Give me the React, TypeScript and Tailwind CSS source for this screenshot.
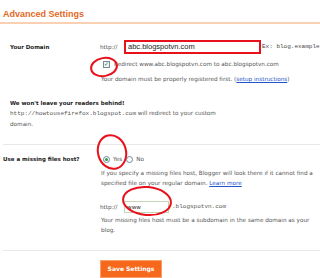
import React from 'react';

const mono = { fontFamily: '"Liberation Mono", "DejaVu Sans Mono", monospace' };

const Ring: React.FC<{ cx: number; cy: number; rx: number; ry: number; rot?: number }> = ({ cx, cy, rx, ry, rot = 0 }) => (
  <svg className="absolute left-0 top-0 pointer-events-none" width={320} height={278}>
    <ellipse cx={cx} cy={cy} rx={rx} ry={ry} transform={`rotate(${rot} ${cx} ${cy})`} fill="none" stroke="#e8101a" strokeWidth={2} />
  </svg>
);

const App: React.FC = () => {
  return (
    <div
      className="relative w-[320px] h-[278px] overflow-hidden bg-white text-[#555] text-[5.7px] leading-[10px]"
      style={{ fontFamily: '"DejaVu Sans", Verdana, sans-serif' }}
    >
      {/* header */}
      <div className="h-[24px] pl-[3px] pt-[8px] border-b-2 border-[#fad0b2]">
        <h1 className="text-[9px] leading-[12px] font-bold text-[#e3691f]" style={{ fontFamily: '"Liberation Sans", Arial, sans-serif' }}>
          Advanced Settings
        </h1>
      </div>

      {/* domain */}
      <div className="mt-[16px] h-[14px] flex items-center">
        <div className="w-[100px] pl-[10px] font-bold text-[#222] text-[5.5px]">Your Domain</div>
        <span className="w-[24px]">http://</span>
        <div className="w-[137px] h-[14px] border-2 border-[#e8101a] bg-white flex items-center pl-[2px]">
          <span className="text-[7.5px] text-[#222]" style={{ fontFamily: '"Liberation Sans", Arial, sans-serif' }}>abc.blogspotvn.com</span>
        </div>
        <span className="ml-[1px] whitespace-nowrap text-[6px] text-[#444]" style={mono}>Ex: blog.example</span>
      </div>

      <div className="mt-[5px] h-[10px] flex items-center pl-[103px]">
        <span className="w-[7px] h-[7px] border border-[#7a8a99] bg-[#eef3f7] flex items-center justify-center text-[6px] leading-none text-[#2a8a2a]">✓</span>
        <span className="ml-[4px] whitespace-nowrap">Redirect www.abc.blogspotvn.com to abc.blogspotvn.com</span>
      </div>

      <div className="mt-[5px] h-[10px] pl-[101px] whitespace-nowrap">
        Your domain must be properly registered first. (<span className="text-[#2255cc] underline">setup instructions</span>)
      </div>

      {/* readers */}
      <div className="mt-[14px] h-[10px] pl-[10px] font-bold text-[#222] text-[5.5px]">We won't leave your readers behind!</div>
      <div className="pl-[10px]">
        <div className="whitespace-nowrap">
          <span className="text-[6px]" style={mono}>http://howtousefirefox.blogspot.com</span> will redirect to your custom
        </div>
        <div>domain.</div>
      </div>

      <div className="mt-[15px] ml-[3px] border-t border-[#e8e8e8]" />

      {/* missing files host */}
      <div className="mt-[9px] h-[10px] flex items-center">
        <div className="w-[100px] pl-[3px] font-bold text-[#222] text-[5.5px]">Use a missing files host?</div>
        <span className="ml-[3px] w-[7px] h-[7px] rounded-full border border-[#6d86a3] bg-white flex items-center justify-center">
          <span className="w-[3px] h-[3px] rounded-full bg-[#2f9a3a]" />
        </span>
        <span className="ml-[3px]">Yes</span>
        <span className="ml-[4px] w-[7px] h-[7px] rounded-full border border-[#6d86a3] bg-white" />
        <span className="ml-[3px]">No</span>
      </div>

      <div className="mt-[4px] pl-[101px]">
        <div className="whitespace-nowrap">If you specify a missing files host, Blogger will look there if it cannot find a</div>
        <div className="whitespace-nowrap">
          specified file on your regular domain. <span className="text-[#2255cc] underline">Learn more</span>
        </div>
      </div>

      <div className="mt-[13px] h-[12px] flex items-center pl-[100px]">
        <span className="w-[24px]">http://</span>
        <div className="w-[45px] h-[12px] border border-[#c5d4b4] bg-white flex items-center pl-[2px]">
          <span className="text-[#333]">www</span>
        </div>
        <span className="ml-[3px] text-[6px]" style={mono}>.blogspotvn.com</span>
      </div>

      <div className="mt-[2px] pl-[101px]">
        <div className="whitespace-nowrap">Your missing files host must be a subdomain in the same domain as your</div>
        <div>blog.</div>
      </div>

      <div className="mt-[15px] ml-[3px] border-t border-[#e8e8e8]" />

      <div className="mt-[9px] pl-[100px]">
        <button className="h-[18px] w-[62px] bg-[#f6681b] border border-[#f9a06a] text-white font-bold text-[6px] leading-none">
          Save Settings
        </button>
      </div>

      <Ring cx={104} cy={67} rx={13} ry={9} rot={-10} />
      <Ring cx={112} cy={152} rx={14} ry={17} rot={-15} />
      <Ring cx={147} cy={201} rx={24} ry={14} rot={5} />
    </div>
  );
};

export default App;
